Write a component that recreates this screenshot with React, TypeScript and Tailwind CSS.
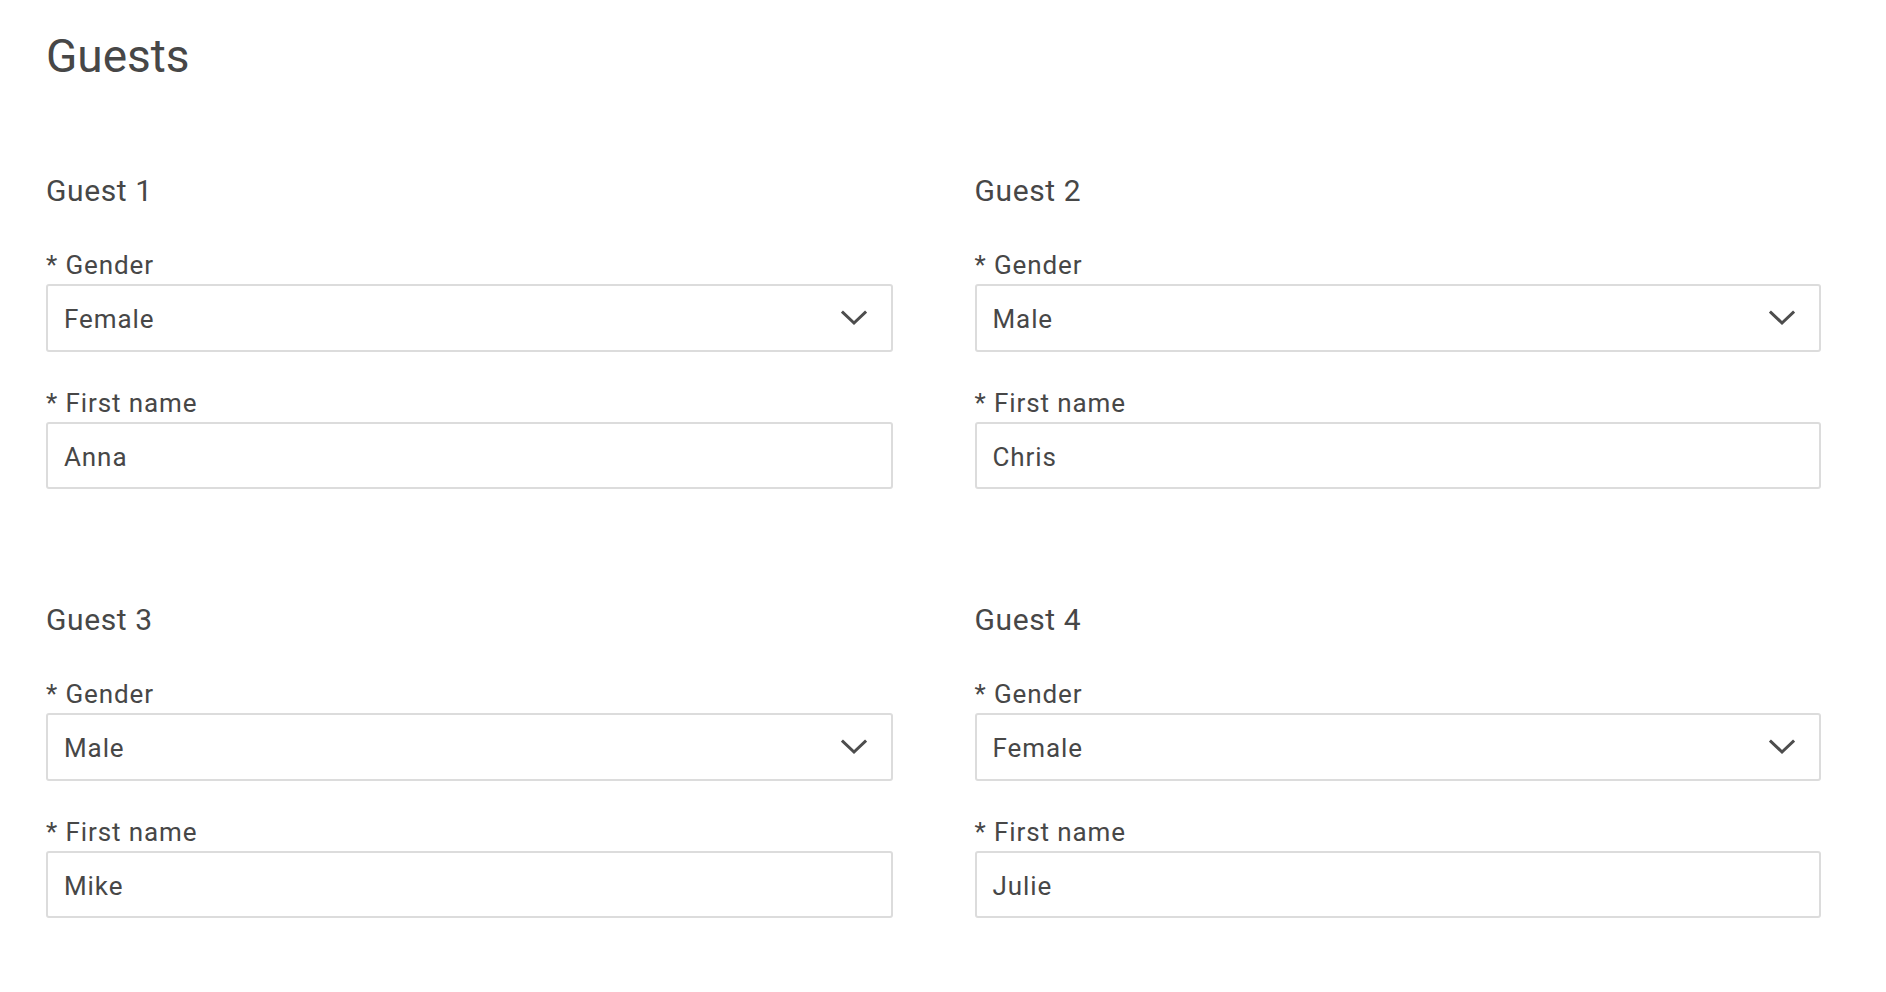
import React from "react";

const guests = [
  { n: 1, gender: "Female", name: "Anna" },
  { n: 2, gender: "Male", name: "Chris" },
  { n: 3, gender: "Male", name: "Mike" },
  { n: 4, gender: "Female", name: "Julie" },
];

function Chevron() {
  return (
    <svg width="26" height="16" viewBox="0 0 26 16" className="shrink-0">
      <path d="M2 2.5 L13 13 L24 2.5" fill="none" stroke="#4d4d4d" strokeWidth="3" strokeLinecap="square" />
    </svg>
  );
}

function Guest({ n, gender, name, top }: { n: number; gender: string; name: string; top: string }) {
  return (
    <div className={top}>
      <h2 className="text-[30px] leading-[36px] font-normal tracking-[0.6px]">Guest {n}</h2>
      <div className="mt-[40px] text-[26px] leading-[32px] tracking-[0.9px]">* Gender</div>
      <div className="mt-[3px] h-[68px] border-2 border-[#dcdcdc] rounded-[3px] flex items-center justify-between pl-[16px] pr-[24px] text-[26px] leading-[32px] tracking-[0.9px]">
        <span className="pt-[2px]">{gender}</span>
        <Chevron />
      </div>
      <div className="mt-[35px] text-[26px] leading-[32px] tracking-[0.9px]">* First name</div>
      <div className="mt-[3px] h-[67px] border-2 border-[#dcdcdc] rounded-[3px] flex items-center pl-[16px] text-[26px] leading-[32px] tracking-[0.9px]">
        <span className="pt-[2px]">{name}</span>
      </div>
    </div>
  );
}

export default function App() {
  return (
    <div
      className="min-h-[992px] bg-white text-[#474747] pl-[46px] pr-[65px] pt-[29px]"
      style={{ fontFamily: "Roboto, 'Noto Sans', sans-serif" }}
    >
      <h1 className="text-[46px] leading-[54px] font-normal">Guests</h1>
      <div className="grid grid-cols-2 gap-x-[82px]">
        {guests.map((g) => (
          <Guest key={g.n} n={g.n} gender={g.gender} name={g.name} top={g.n <= 2 ? "mt-[90px]" : "mt-[113px]"} />
        ))}
      </div>
    </div>
  );
}
